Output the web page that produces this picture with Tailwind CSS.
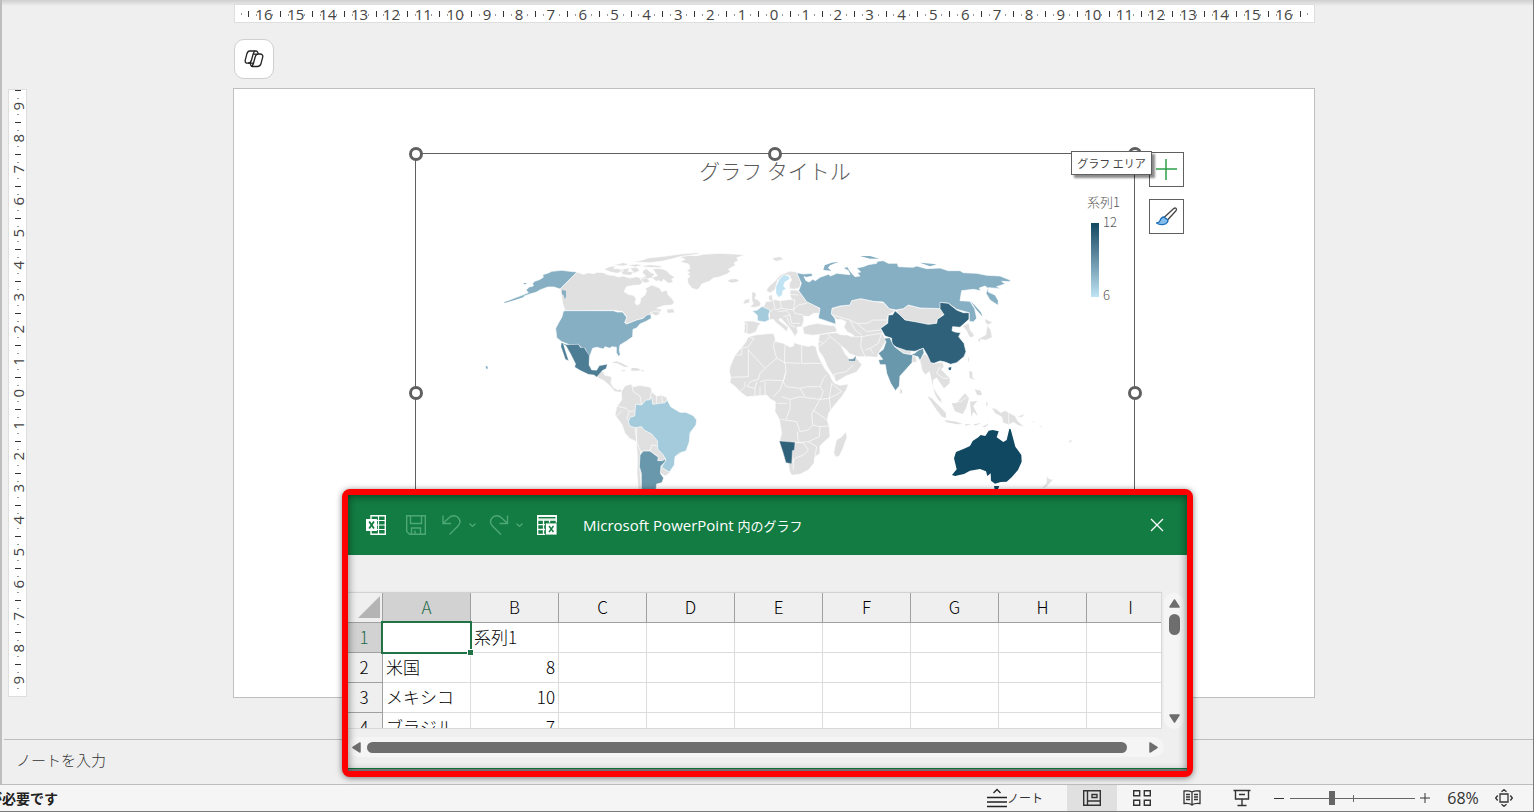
<!DOCTYPE html>
<html lang="ja">
<head>
  <meta charset="UTF-8" />
  <meta name="viewport" content="width=device-width, initial-scale=1.0"/>
  <title>PowerPoint</title>
  <script src="https://cdn.jsdelivr.net/npm/@tailwindcss/browser@4"></script>
  <style>
    body { font-family: 'Open Sans', 'Noto Sans CJK JP', sans-serif; }
    .jp { font-family: 'Noto Sans CJK JP', sans-serif; }
  </style>
</head>
<body class="relative min-h-screen flex flex-col overflow-hidden bg-[#efefef] text-[#333] border-r border-b border-[#7a7a7a]">

<!-- Editing area -->
<main class="flex-1 flex flex-col border-l-2 border-[#bdbdbd] pr-3 bg-linear-to-b from-[#cfcfcf] to-[#efefef] to-[6px]">
  <div class="grid grid-cols-[25px_1fr] grid-rows-[88px_auto]">
    <div class="col-start-2 mx-[206px] pt-1 pl-px flex flex-col justify-between">
      <div id="ruler-x" class="h-[19px] flex items-center bg-white border border-[#dedede] text-[15px] leading-4 text-[#444]"></div>
      <button aria-label="Copilot" class="w-10 h-10 mb-[9px] flex items-center justify-center bg-white border border-[#cfcfcf] rounded-[10px]">
        <svg class="w-5 h-5" viewBox="0 0 20 20" fill="none" stroke="#222" stroke-width="1.3" stroke-linejoin="round">
          <path d="M5.500 2h6.500c1 0 1.500.6 1.800 1.500L14.200 5H16c2 0 3.200 1.300 2.700 3.200l-1.600 6c-.6 2-1.500 3.300-3.500 3.300H8.500c-1 0-1.500-.6-1.800-1.500L6.200 14.200H3.600C1.700 14.200 .8 12.800 1.300 10.900l1.500-5.700C3.400 3 3.700 2 5.500 2z"/>
          <path d="M11.200 2C9.800 2.600 9.400 4 9 5.500L7.500 11c-.5 2-1 3.200-3.500 3.200M14.200 5c-1.900 0-2.400 1-2.800 2.300L9.800 13c-.4 2-.9 3.900-2.600 4.300M9 5.200h5M6.200 14.200h3.200"/>
        </svg>
      </button>
    </div>

    <div id="ruler-y" class="ml-[6px] w-[19px] my-px flex flex-col bg-white border border-[#dedede] text-[15px] leading-4 text-[#444]"></div>

    <!-- Slide -->
    <div class="relative mx-[206px] aspect-[1082/610] bg-white border border-[#bfbfbf]">
      <!-- Chart object, placed on the slide -->
      <section class="jp absolute left-[181px] top-16 w-[720px] h-[480px] border border-[#606060] text-[#595959]">
        <h1 class="text-center text-[21px] leading-8 font-light">グラフ タイトル</h1>

        <svg class="absolute left-16 top-[86px] w-[600px] h-[250px]" viewBox="0 0 1800 750" stroke="#fff" stroke-width="2" stroke-linejoin="round">
          <!-- Americas -->
          <g fill="#e0e0e0">
            <path d="M597 50L625 46 650 47 670 43 720 40 760 42 795 45 770 53 775 62 762 68 766 76 745 88 752 93 742 102 715 112 700 114 688 124 665 132 658 145 650 149 636 145 624 130 622 118 630 108 622 103 629 97 620 92 630 85 626 72 600 66 615 58z"/>
            <path d="M291 96L310 103 325 98 340 101 352 97 370 98 385 105 400 106 415 111 430 108 450 114 470 110 482 115 497 108 487 98 490 90 500 86 510 96 524 102 516 112 532 108 526 98 518 88 530 85 548 87 560 92 568 101 585 112 575 117 580 127 565 130 550 118 546 126 536 122 528 124 518 115 508 114 500 120 504 128 488 126 480 135 462 136 440 140 432 155 445 163 460 166 468 175 465 190 472 195 480 190 482 175 495 165 500 152 495 146 515 135 526 139 540 145 545 155 560 150 565 165 578 178 583 188 575 195 550 197 530 205 545 208 540 217 530 214 512 225 490 235 470 240 440 252 435 245 440 230 428 215 400 211 255 212 248 190 245 170 240 147z"/>
            <path d="M372 88L388 80 408 78 400 86 418 86 432 92 412 100 392 96zM420 88L450 84 444 94 462 96 452 106 428 104zM398 76L428 68 450 72 432 78zM450 84L470 82 480 92 462 100zM452 66L480 62 505 54 560 48 600 42 650 38 662 41 600 50 572 58 545 64 510 68zM480 78L510 74 548 78 540 83 500 82zM440 76l30-4 20 4-25 5zM510 218l20-6 12 8-14 8zM560 208l20-2 4 12-22 2zM480 118l20-4 10 10-14 6z"/>
            <path d="M742 122L752 117 768 116 778 121 770 127 755 129 747 126z"/>
            <path d="M348 408L360 396 370 394 374 405 395 410 393 430 400 442 412 449 424 447 425 457 405 455 390 438 372 422 355 414z"/>
            <path stroke="none" d="M395 368L408 364 425 369 447 382 432 380 412 370zM455 384l16 0 12 6-12 2-18 0zM484 391h8v3h-8zM425 391h10v3h-10z"/>
            <path d="M424 455L435 437 455 432 460 440 480 436 512 442 518 458 530 468 545 466 560 472 562 485 575 505 600 517 640 525 650 540 628 590 620 630 585 650 583 675 568 700 555 708 543 700 550 715 530 735 528 750 475 750 471 700 472 650 469 605 450 596 435 580 425 552 405 525 410 500 425 480z"/>
          </g>
          <path fill="none" d="M455 432L460 455 480 468 485 495M515 450L510 478M530 468L530 490M545 470L548 488M410 498L438 505 448 515 462 512M425 512L408 530M448 515L440 535 465 563 470 605M470 563L470 605 482 635 480 690 484 745M482 635L510 633 515 615 530 617M510 633L535 650"/>
          <g fill="#86afc4">
            <path d="M291 96L240 147 222 141 204 141 190 146 180 150 168 157 150 162 128 170 100 179 75 187 110 172 145 158 138 150 148 141 160 138 158 130 164 124 178 119 190 112 188 104 205 99 215 94 245 91 270 94z"/>
            <path stroke="none" d="M72 187L100 177 130 167 132 171 102 181 74 189zM132 129l8 1-2 3-8-1zM246 150l12 2v20l-4 4-3-10-5-4z"/>
            <path d="M255 212H400L412 216 428 216 440 232 434 248 440 252 470 240 490 235 500 225 512 222 514 235 500 243 480 252 470 264 459 268 458 290 440 303 420 315 418 330 421 345 415 349 409 338 409 322 395 320 390 325 375 320 370 327 350 322 338 325 330 347 324 347 315 325 305 325 295 313 270 315 245 305 230 293 227 265 236 248 246 230 250 214z"/>
            <path stroke="none" d="M17 377l6 3v6h-5z"/>
          </g>
          <path fill="#4c7d94" stroke-width="1" d="M244 308L260 314 295 313 302 323 312 322 328 347 327 375 335 390 350 391 358 377 382 373 378 386 368 391 350 411 342 405 325 403 300 391 284 381 287 372 272 342 258 317 250 312 256 332 266 362 256 358 250 340 243 320z"/>
          <path fill="#a4cbdb" d="M467 492L485 495 498 480 508 480 515 473 518 493 540 490 555 488 562 480 572 500 600 517 618 517 640 527 650 540 648 555 630 578 628 605 618 633 600 638 585 650 583 675 568 696 545 682 557 660 550 645 533 627 532 602 515 582 492 570 485 560 465 563 450 558 445 545 450 532 464 528z"/>
          <path fill="#6997ab" d="M490 633L510 633 535 652 533 662 548 662 557 655 555 665 543 678 541 700 551 714 546 728 530 732 528 750 484 750 484 700 478 680 480 645z"/>

          <!-- Europe, Africa, Asia and Oceania -->
          <g transform="translate(780 0)">
            <g fill="#e0e0e0">
              <path d="M25 290L45 285 75 282 100 280 106 296 106 304 130 310 150 321 160 318 162 308 185 315 205 319 218 316 228 320 234 345 246 370 256 388 270 405 276 420 284 430 300 436 325 432 320 448 305 470 280 500 266 520 262 540 268 560 270 590 250 608 240 618 240 640 224 652 222 670 205 690 180 703 155 706 148 692 145 670 135 665 118 605 125 580 118 538 105 515 106 485 92 478 80 465 50 468 20 470 0 455 -14 440 -30 428 -28 410 -32 395 -30 380 -15 345 5 322 18 305z"/>
              <path d="M318 575L321 592 308 628 298 648 287 652 281 638 289 600 305 590z"/>
              <path d="M12 244L40 243 63 250 55 258 48 275 30 283 12 278 14 260z"/>
              <path d="M70 202L78 184 92 184 100 178 120 182 155 178 150 168 150 150 170 150 178 155 200 185 222 195 240 205 240 220 222 220 205 230 190 228 192 240 186 260 170 262 174 275 165 290 156 275 146 260 132 245 122 234 116 240 145 262 140 275 128 264 108 248 100 238 88 240 88 215z"/>
              <path d="M80 148L88 138 104 124 122 104 150 93 170 96 182 125 180 142 165 148 148 146 148 130 155 120 148 106 130 105 112 122 106 148 92 158 82 156z"/>
              <path stroke-width="1" d="M36 157L45 157 48 165 44 176 54 180 62 190 60 198 44 202 30 201 40 192 36 180zM14 180l14-4 0 12-18 4zM88 182l-2-14 10-4 2 16zM95 55l25-5 10 8-22 6z"/>
              <path d="M188 262L205 255 232 250 262 255 285 258 292 275 262 280 238 284 215 286 192 282z"/>
              <path d="M238 284L262 280 290 278 302 284 322 285 335 290 342 286 322 276 312 262 318 245 302 238 292 240 274 222 276 205 300 198 330 195 335 182 362 176 400 184 430 188 448 206 468 212 445 225 440 250 422 265 432 290 440 300 415 340 412 352 385 350 355 350 330 342 318 330 304 320 316 342 330 358 345 350 366 374 350 396 318 408 288 426 278 405 262 380 250 352 236 332 234 315z"/>
              <path d="M468 212L490 206 505 195 540 204 600 206 612 222 592 238 590 250 565 253 495 240 480 225z"/>
              <path d="M466 322L482 320 515 334 512 344 490 340zM512 348l14 0 6 18-16 2zM480 445l8 6-2 12-8-4z"/>
              <path d="M540 362L552 340 565 350 580 370 608 366 612 380 604 388 630 415 630 430 612 446 600 430 590 414 580 420 580 440 592 462 604 478 606 490 594 480 584 462 576 430 568 395 555 405 546 390z"/>
              <path stroke="none" d="M562 468L575 475 600 500 618 520 618 534 606 530 590 510zM615 540L650 545 668 552 650 553 618 546zM675 552l20 1-18 4zM700 553l24-4-18 8zM726 560l22-10-12 12zM635 490L650 488 675 460 687 474 678 505 668 522 645 514zM690 485L712 483 700 498 714 528 700 515 694 532zM740 482l4 12-6 4zM688 392l9 4 0 16 8 8-16-6zM704 448l18 4 4 12-14 2zM684 350l4 6-4 12z"/>
              <path stroke-width="1" d="M755 503L770 508 782 518 795 512 825 528 832 542 852 560 835 556 820 546 806 554 790 548 785 530 765 520zM832 530l22-8-8 10zM870 538l14 10-2 2zM895 551l12 10-2 2z"/>
              <path stroke-width="1" d="M735 236L748 243 758 245 746 254 736 248zM742 256L752 270 756 292 738 300 722 298 718 310 714 298 738 284zM668 258L686 250 690 270 702 284 698 292 688 290 680 272zM921 708l6 9 12 2-20 22-14 5 14-16zM985 604l14-6-8 10z"/>
            </g>
            <!-- Country borders -->
            <path fill="none" stroke-width="2" d="M25 290L42 295 25 320 5 325 5 345-15 345M25 325L25 410-28 412M25 330L75 385 110 355 100 320 105 300M75 385L60 400 55 418 30 425 22 440 45 445 50 425M110 355L135 368 182 370M135 315L133 368M185 315V370H245M135 368L138 395 130 422 80 420 60 425M138 395L130 425 138 440 180 445 200 440 240 440 250 415 260 405M130 422L120 450 100 470M75 425L75 465M60 440V468M45 445V468M15 425V440L0 455M125 470L150 478 180 470 215 475 240 478 268 475 275 430 305 455 268 475 272 510M180 445L195 470M240 440L250 455 240 478 225 505 215 520 218 555 205 570 180 575 170 545 122 538M218 510L262 540M150 478L150 505 138 538M110 490H140M218 555L240 560 268 558M240 560L238 590 205 605 175 608 172 575M205 605L230 620 225 650M163 607L190 608 205 630 190 645 165 655 155 670M160 655V690M232 300L250 310 270 290 262 280M270 290L320 330M250 310L238 320M285 425L282 402 318 395 340 375M335 290L365 290 390 285 425 280M365 290L362 320 375 350M390 325L375 330M425 280L415 310 390 325 400 340M280 225L330 240 350 250 380 250 400 240 445 240M330 240L345 270 365 285M350 250L380 275 420 270M100 180L105 205 90 215M120 182L125 205 105 210M125 205L160 210 165 180 150 178M160 210L175 195 200 190M160 210L165 220 190 225M115 215L140 212 150 225 130 230M150 225L155 250 180 250M140 230L150 255 165 262M150 163L175 165M12 250L22 252 20 278M600 380L590 400 610 415 625 415M806 512V552M636 488l28-4 18-14"/>
            <g fill="#86afc4">
              <path d="M170 98L190 102 215 100 218 108 200 112 192 110 198 122 208 126 218 118 226 122 240 112 265 103 272 108 290 100 330 104 325 92 310 84 322 80 332 96 345 110 360 108 352 98 362 96 350 84 370 80 385 74 410 70 412 64 430 62 445 70 472 70 475 80 520 82 530 78 560 86 600 84 625 92 660 92 670 98 710 100 740 106 780 108 810 120 812 125 785 124 795 132 770 140 785 146 745 143 745 156 765 165 775 182 774 196 750 180 738 160 744 145 735 138 718 144 722 152 700 148 665 152 660 182 690 184 704 206 710 235 700 246 688 244 687 218 650 208 625 190 602 187 606 206 540 204 505 195 490 206 468 210 448 206 430 186 400 184 362 176 335 182 330 195 300 198 276 205 274 222 285 236 288 253 265 245 235 235 240 205 220 195 200 185 176 152 184 130z"/>
              <path stroke="none" d="M250 90L254 76 275 68 296 65 270 76 264 84 274 92zM360 48l30 0 28 8-28 0zM540 68l50 5-20 6zM692 182l30 34 6 14-20-22z"/>
            </g>
            <path fill="#2f627a" d="M422 265L443 250 445 225 458 224 465 212 480 225 495 240 530 246 565 253 590 250 592 238 612 224 600 206 600 187 625 190 650 210 670 218 687 218 687 238 660 262 638 260 636 272 645 276 662 278 656 290 672 310 678 335 672 350 650 368 632 373 615 366 600 363 582 370 572 368 563 348 550 325 525 334 500 332 470 322 455 312 455 295 435 288z"/>
            <path fill="#2f627a" stroke="none" d="M625 383l9-2-1 8-6 2z"/>
            <path fill="#2f627a" stroke-width="1" d="M118 603L165 607 163 630 157 632 155 671 138 668 130 640z"/>
            <path fill="#6997ab" d="M432 295L450 293 458 312 466 322 490 340 514 344 524 340 536 330 550 325 552 338 540 362 534 350 518 346 516 368 500 386 480 408 478 438 466 452 452 430 440 400 436 374 420 374 415 360 428 358 415 340 430 328 438 305z"/>
            <path fill="#6997ab" stroke="none" d="M326 358l14 0 8-11-3 16-18-1z"/>
            <path fill="#a4cbdb" d="M37 213L52 210 66 199 90 210 86 225 88 240 74 246 52 242 52 226z"/>
            <path fill="#bfe3f2" stroke-width="1" d="M118 118L132 104 148 110 148 118 134 126 130 138 138 146 128 152 126 166 116 172 108 160 108 140z"/>
            <path fill="#104862" stroke="none" d="M636 705L650 688 642 655 648 636 672 626 690 618 698 603 715 592 722 585 736 588 746 572 758 570 776 574 770 592 790 606 800 600 808 566 812 568 818 590 826 620 844 645 845 665 834 690 815 712 800 725 782 726 765 731 753 722 752 700 742 708 738 694 720 687 690 692 672 702 645 708z"/>
            <path fill="#104862" stroke="none" d="M762 738l16 0-4 10-10 0z"/>
          </g>
        </svg>

        <!-- Colour scale -->
        <div class="absolute top-10 right-[13px] w-[34px] text-[13px] leading-4 font-light">
          <div>系列1</div>
          <div class="flex gap-1 pl-1 mt-[13px]">
            <div class="w-2 h-[74px] bg-linear-to-b from-[#104862] to-[#c0e4f5]"></div>
            <div class="flex flex-col justify-between -mt-[9px] -mb-1.5"><span>12</span><span>6</span></div>
          </div>
        </div>

        <span class="absolute -left-[7px] -top-[7px] size-[14px] rounded-full border-3 border-[#606060] bg-white"></span>
        <span class="absolute left-1/2 -ml-[7px] -top-[7px] size-[14px] rounded-full border-3 border-[#606060] bg-white"></span>
        <span class="absolute -right-[8px] -top-[7px] size-[14px] rounded-full border-3 border-[#606060] bg-white"></span>
        <span class="absolute -left-[7px] top-1/2 -mt-[7px] size-[14px] rounded-full border-3 border-[#606060] bg-white"></span>
        <span class="absolute -right-[8px] top-1/2 -mt-[7px] size-[14px] rounded-full border-3 border-[#606060] bg-white"></span>

        <div class="absolute -top-0.5 left-[733px] flex flex-col gap-3">
          <button aria-label="グラフ要素" class="size-[35px] flex items-center justify-center bg-white border border-[#606060]">
            <svg class="size-[21px]" viewBox="0 0 21 21" stroke="#2f9e49" stroke-width="1.500"><path d="M10 0v21M0 10h21"/></svg>
          </button>
          <button aria-label="グラフ スタイル" class="size-[35px] flex items-center justify-center bg-white border border-[#606060]">
            <svg class="size-[22px]" viewBox="0 0 22 22" fill="none" stroke-width="1.300" stroke-linejoin="round">
              <path d="M8 11.500L17.500 2.700c1.800-1.500 4-.2 2.500 2L11.500 14z" stroke="#444" fill="#fff"/>
              <path d="M8 11c-3 .2-3.500 2-4 3.800-.5 1.500-1.500 2-3.500 2.200C4 19.500 9.500 19 11.300 16.300c.8-1.200.7-2 .2-2.500z" stroke="#1e6fb8" fill="#83beec"/>
            </svg>
          </button>
        </div>
        <div class="absolute -top-[3px] left-[655px] w-[81px] h-6 bg-white border border-[#606060] text-center text-[11px] leading-[22px] text-[#444] shadow-[3px_3px_2px_rgba(0,0,0,0.45)]">グラフ エリア</div>
      </section>
    </div>
  </div>
</main>

<!-- Notes -->
<div class="h-[45px] border-l-2 border-[#bdbdbd]">
  <div class="h-full ml-0.5 border-t border-[#bdbdbd]">
    <input type="text" aria-label="ノート" placeholder="ノートを入力" class="jp w-full h-[38px] px-3 text-[15px] font-light outline-none placeholder:text-[#333]"/>
  </div>
</div>

<!-- Status bar -->
<footer class="h-[27px] flex items-stretch border-t border-[#bdbdbd] bg-[#f5f5f5] pr-5">
  <div class="jp flex-1 overflow-hidden whitespace-nowrap"><p class="-ml-3 text-sm leading-[27px] font-bold text-[#222]">が必要です</p></div>
  <button class="jp flex items-center pr-6 text-xs text-[#333]">
    <svg class="w-5 h-5" viewBox="0 0 20 20" fill="none" stroke="#222" stroke-width="1.300"><path d="M0 9.500h20M0 14h20M0 18.500h20M6.500 5L10 1.500 13.500 5"/></svg>
    ノート
  </button>
  <button aria-label="標準" class="w-[50px] flex items-center justify-center bg-[#e0e0e0]">
    <svg class="w-[18px] h-4" viewBox="0 0 18 16" fill="none" stroke="#333" stroke-width="1.400"><path d="M.7.700h16.600v14.600H.7zM4.500.7v14.600M4.500 11h12.800M9 4.500h5v3H9z"/></svg>
  </button>
  <button aria-label="スライド一覧" class="w-[50px] flex items-center justify-center">
    <svg class="w-[18px] h-4" viewBox="0 0 18 16" fill="none" stroke="#333" stroke-width="1.400"><path d="M.7.700h6v5h-6zM11.300.700h6v5h-6zM.7 10.300h6v5h-6zM11.300 10.300h6v5h-6z"/></svg>
  </button>
  <button aria-label="閲覧表示" class="w-[50px] flex items-center justify-center">
    <svg class="w-[18px] h-4" viewBox="0 0 18 16" fill="none" stroke="#333" stroke-width="1.300"><path d="M9 2C7.500.900 4 .6 1 1v12.500c3-.3 6.500 0 8 1.500 1.500-1.500 5-1.800 8-1.500V1c-3-.4-6.500-.1-8 1zM9 2v13M3 4.500h4M3 7h4M3 9.500h4M11 4.500h4M11 7h4M11 9.500h4"/></svg>
  </button>
  <button aria-label="スライド ショー" class="w-[50px] flex items-center justify-center">
    <svg class="w-[18px] h-[18px]" viewBox="0 0 18 18" fill="none" stroke="#333" stroke-width="1.400"><path d="M.5 1.500h17M2.500 1.500v8.500h13V1.500M6 5.500h6M9 10v6.500M4.500 16.500h9"/></svg>
  </button>
  <button aria-label="縮小" class="w-[23px] flex items-center justify-center"><span class="w-2.5 h-px bg-[#333]"></span></button>
  <div class="relative w-[125px] flex items-center">
    <span class="absolute left-1/2 top-1/2 -mt-[3px] w-px h-[7px] bg-[#666]"></span>
    <input type="range" min="0" max="100" value="33" aria-label="ズーム" class="relative w-full h-4 appearance-none bg-transparent [&::-webkit-slider-runnable-track]:h-px [&::-webkit-slider-runnable-track]:bg-[#666] [&::-webkit-slider-thumb]:appearance-none [&::-webkit-slider-thumb]:w-1.5 [&::-webkit-slider-thumb]:h-3.5 [&::-webkit-slider-thumb]:-mt-[7px] [&::-webkit-slider-thumb]:bg-[#666]"/>
  </div>
  <button aria-label="拡大" class="w-5 flex items-center justify-center"><svg class="size-2.5" viewBox="0 0 10 10" stroke="#333"><path d="M5 0v10M0 5h10"/></svg></button>
  <button class="ml-3 w-8 text-base leading-none text-[#333]">68%</button>
  <button aria-label="ウィンドウに合わせる" class="ml-4 flex items-center">
    <svg class="size-[18px]" viewBox="0 0 18 18" fill="none" stroke="#333" stroke-width="1.300"><path d="M5 5h8v8H5zM6.500 2.700L9 .7l2.500 2M6.500 15.300l2.500 2 2.500-2M2.700 6.500L.7 9l2 2.500M15.300 6.500l2 2.500-2 2.500"/></svg>
  </button>
</footer>

<!-- Chart data window -->
<section class="absolute top-[489px] left-[342px] right-[340px] border-6 border-[#ff0000] rounded-lg bg-[#efefef] shadow-[0_1px_6px_rgba(0,0,0,0.5)]">
  <header class="h-[60px] flex items-center bg-[#127c42] px-[18px] text-white">
    <svg class="w-5 h-5" viewBox="0 0 20 20">
      <path d="M5 .7h14.300v18.600H5z" fill="#127c42" stroke="#fff" stroke-width="1.400"/>
      <path d="M5 5.500h14M5 10h14M5 14.500h14M12.500 1v18" stroke="#fff" stroke-width="1.200"/>
      <path d="M0 4h11v12H0z" fill="#fff"/>
      <path d="M3.200 6.500L8 13.500M8 6.500L3.200 13.500" stroke="#127c42" stroke-width="1.800"/>
    </svg>
    <button aria-label="保存" class="ml-5">
      <svg class="w-5 h-5" viewBox="0 0 20 20" fill="none" stroke="#4ea875" stroke-width="1.400"><path d="M.7.700h18.600v18.600H3.500L.7 16.500zM4.500.7v7.800h11V.7M5.500 19v-6h9v6M9 19v-3.500"/></svg>
    </button>
    <button aria-label="元に戻す" class="ml-4 flex items-center gap-[7px]">
      <svg class="w-5 h-5" viewBox="0 0 20 20" fill="none" stroke="#4ea875" stroke-width="1.400"><path d="M1 .5v8h8M1.500 8L7 2.800c3-3 7.500-2.500 9.500.200 2 2.500 1.800 5.500-.5 8L7.500 19.500"/></svg>
      <svg class="w-[7px] h-1" viewBox="0 0 7 4" fill="none" stroke="#4ea875" stroke-width="1.200"><path d="M.5.500l3 3 3-3"/></svg>
    </button>
    <button aria-label="やり直し" class="ml-[13px] flex items-center gap-[7px]">
      <svg class="w-5 h-5" viewBox="0 0 20 20" fill="none" stroke="#4ea875" stroke-width="1.400"><path d="M18.500.500v8h-8M18 8l-5.500-5.200C9.500-.2 5 .3 3 3c-2 2.500-1.800 5.500.5 8l8.500 8.500"/></svg>
      <svg class="w-[7px] h-1" viewBox="0 0 7 4" fill="none" stroke="#4ea875" stroke-width="1.200"><path d="M.5.500l3 3 3-3"/></svg>
    </button>
    <button aria-label="Microsoft Excel でデータを編集" class="ml-[14px]">
      <svg class="w-5 h-5" viewBox="0 0 20 20" fill="none" stroke="#fff" stroke-width="1.300">
        <path d="M.7.700h18.600v18.600H.7zM.7 5h18.600M.7 9.700h8M.7 14.500h8M6.500 5v14M12.500 5v3"/>
        <path d="M1 1h18v3.500H1z" fill="#fff" stroke="none"/>
        <path d="M1.500 2.700h17" stroke="#127c42" stroke-width="1.500"/>
        <path d="M8.500 8H20v12H8.500z" fill="#fff" stroke="#127c42" stroke-width=".8"/>
        <path d="M12 11l4.500 6M16.500 11L12 17" stroke="#127c42" stroke-width="1.400"/>
      </svg>
    </button>
    <h2 class="ml-[26px] flex-1 text-[15px]">Microsoft PowerPoint <span class="text-[13px]">内のグラフ</span></h2>
    <button aria-label="閉じる" class="mr-[5px]">
      <svg class="w-3.5 h-3.5" viewBox="0 0 14 14" stroke="#fff" stroke-width="1.300"><path d="M1 1l12 12M13 1L1 13"/></svg>
    </button>
  </header>

  <div class="flex mt-[38px]">
    <div class="jp flex-1 h-[136px] overflow-hidden border-b border-r border-[#d9d9d9] shadow-[0_-1px_1px_rgba(0,0,0,0.12)]">
      <table class="table-fixed w-[827px] border-separate border-spacing-0 text-[17px] leading-[27px] font-light text-black">
        <thead>
          <tr class="[&>th]:h-[30px] [&>th]:p-0 [&>th]:pb-0.5 [&>th]:font-light [&>th]:border-r [&>th]:border-b [&>th]:border-[#a0a0a0]">
            <th class="w-[35px]"><svg class="w-[22px] h-[22px] ml-2.5" viewBox="0 0 22 22"><path d="M22 0v22H0z" fill="#b4b4b4"/></svg></th>
            <th scope="col" class="w-[88px] bg-[#d2d2d2] text-[#1e6b48]">A</th>
            <th scope="col" class="w-[88px]">B</th><th scope="col" class="w-[88px]">C</th><th scope="col" class="w-[88px]">D</th><th scope="col" class="w-[88px]">E</th><th scope="col" class="w-[88px]">F</th><th scope="col" class="w-[88px]">G</th><th scope="col" class="w-[88px]">H</th><th scope="col" class="w-[88px]">I</th>
          </tr>
        </thead>
        <tbody id="rows" class="[&_th]:font-light [&_th]:p-0 [&_th]:pb-0.5 [&_th]:pr-0.5 [&_th]:border-b [&_th]:border-r [&_th]:border-[#a0a0a0] [&_td]:h-[30px] [&_td]:px-[3px] [&_td]:pt-0 [&_td]:pb-0.5 [&_td]:bg-white [&_td]:border-r [&_td]:border-b [&_td]:border-[#dcdcdc]"></tbody>
      </table>
    </div>
    <div class="w-5 ml-0.5 mr-[3px] py-1.5 flex flex-col items-center rounded-full bg-[#f5f5f5]">
      <svg class="w-[11px] h-[9px]" viewBox="0 0 11 9"><path d="M5.500 1L10 8H1z" fill="#6e6e6e" stroke="#6e6e6e" stroke-width="1.500" stroke-linejoin="round"/></svg>
      <div class="mt-1.5 w-[11px] h-[21px] rounded-full bg-[#6e6e6e]"></div>
      <svg class="w-[11px] h-[9px] mt-auto" viewBox="0 0 11 9"><path d="M5.500 8L10 1H1z" fill="#6e6e6e" stroke="#6e6e6e" stroke-width="1.500" stroke-linejoin="round"/></svg>
    </div>
  </div>
  <div class="mt-2 mr-[23px] h-5 pl-1 pr-1.5 flex items-center rounded-full bg-[#f5f5f5]">
    <svg class="w-[9px] h-[11px]" viewBox="0 0 9 11"><path d="M1 5.500L8 1v9z" fill="#6e6e6e" stroke="#6e6e6e" stroke-width="1.500" stroke-linejoin="round"/></svg>
    <div class="flex-1 ml-1.5 mr-[22px] h-[11px] rounded-full bg-[#6e6e6e]"></div>
    <svg class="w-[9px] h-[11px]" viewBox="0 0 9 11"><path d="M8 5.500L1 1v9z" fill="#6e6e6e" stroke="#6e6e6e" stroke-width="1.500" stroke-linejoin="round"/></svg>
  </div>
  <div class="mt-[11px] border-t border-[#127c42] h-[3px] bg-[#8a8a8a]"></div>
  <div class="absolute inset-0 pointer-events-none shadow-[inset_0_1px_9px_rgba(0,0,0,0.5)]"></div>
</section>

<script>
  const data = [['', '系列1'], ['米国', 8], ['メキシコ', 10], ['ブラジル', 7]];
  const rows = document.getElementById('rows');

  data.forEach(([name, value], i) => {
    const first = i === 0;
    const selection = first
      ? '<span class="absolute -left-0.5 -top-0.5 -right-0.5 -bottom-0.5 border-2 border-[#217346]"></span><span class="absolute -right-[3px] -bottom-[3px] size-[5px] bg-[#217346] outline outline-white"></span>'
      : '';
    rows.innerHTML += `<tr>
      <th scope="row" class="${first ? 'bg-[#d2d2d2] text-[#1e6b48]' : ''}">${i + 1}</th>
      <td class="${first ? 'relative z-10' : ''}">${name}${selection}</td>
      <td class="${first ? '' : 'text-right'}">${value}</td>${'<td></td>'.repeat(7)}
    </tr>`;
  });

  // numbers count outwards from 0 in the middle, with a tick halfway between them
  function drawRuler(id, max, vertical) {
    const cells = [];
    for (let n = -max; n <= max; n++) {
      cells.push(vertical
        ? `<div class="relative flex-1 flex items-center justify-center">
             <i class="absolute top-0 left-1.5 w-1.5 h-px bg-[#333]"></i>
             <i class="absolute top-1/4 left-2 w-0.5 h-px bg-[#999]"></i>
             <i class="absolute top-3/4 left-2 w-0.5 h-px bg-[#999]"></i>
             <span class="[writing-mode:vertical-rl] rotate-180">${Math.abs(n)}</span>
           </div>`
        : `<div class="relative flex-1 text-center">
             <i class="absolute left-0 top-[5px] w-px h-1.5 bg-[#333]"></i>
             <i class="absolute left-1/4 top-2 w-px h-0.5 bg-[#999]"></i>
             <i class="absolute left-3/4 top-2 w-px h-0.5 bg-[#999]"></i>
             <span>${Math.abs(n)}</span>
           </div>`);
    }
    const end = '<i class="mx-1.5 w-px h-0.5 bg-[#999]"></i>';
    const lastTick = '<i class="w-px h-1.5 bg-[#333]"></i>';
    document.getElementById(id).innerHTML = vertical ? cells.join('') : end + cells.join('') + lastTick + end;
  }

  drawRuler('ruler-x', 16, false);
  drawRuler('ruler-y', 9, true);
</script>
</body>
</html>
